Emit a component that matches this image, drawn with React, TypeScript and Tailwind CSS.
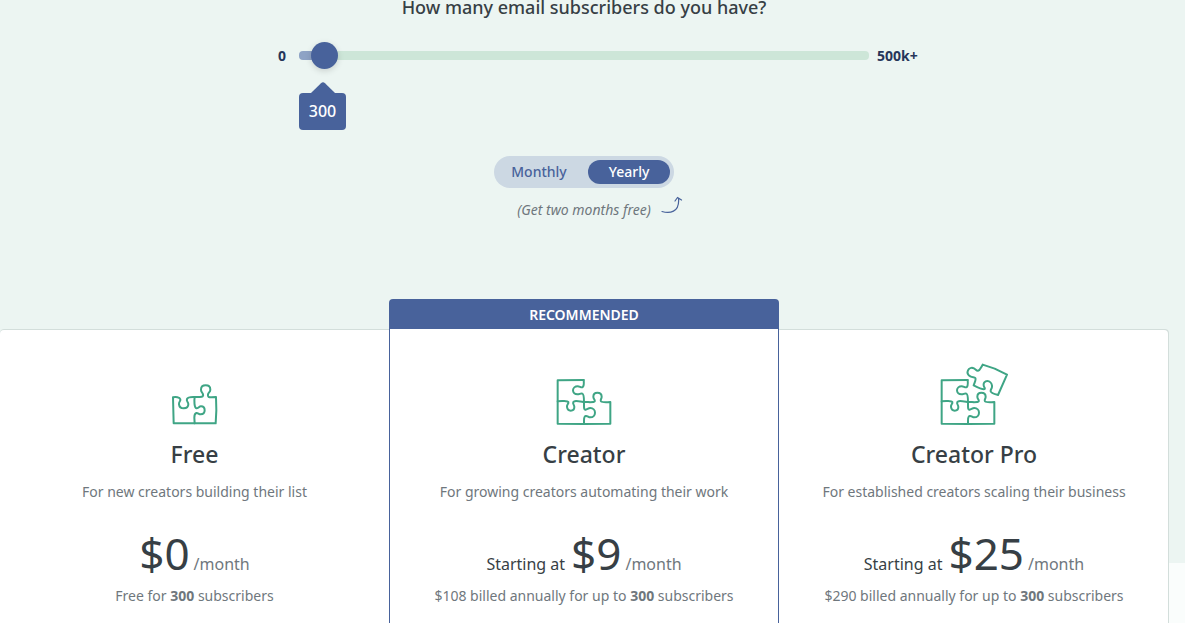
import { useState } from 'react';
import type { ReactNode } from 'react';

type Billing = 'monthly' | 'yearly';

interface Plan {
  name: string;
  tagline: string;
  price: string;
  prefix?: string;
  billing: string;
  icon: ReactNode;
  recommended?: boolean;
  frame: string;
}

const SUBSCRIBERS = 300;

function FreeIcon() {
  return (
    <svg viewBox="60 36 144 126" className="w-12 h-[42px]" fill="none" stroke="#3fa585" strokeWidth="6" strokeLinecap="round" strokeLinejoin="round" aria-hidden="true">
      <path d="M68 157 L66 79 c8 -2 20 -1 22 6 c1 7 -5 6 -4 15 c1 8 7 12 14 12 c8 0 14 -4 14 -12 c0 -8 -7 -9 -4 -16 c3 -7 12 -6 23 -6 h16 c7 0 11 -2 9 -8 c-2 -6 -6 -7 -6 -14 c0 -8 6 -13 14 -13 s14 5 14 13 c0 7 -6 8 -7 14 c-2 8 3 9 10 9 l14 -1 l1 40 l-2 39 Z" />
      <path d="M131 79 c-2 10 -1 32 5 33 c5 1 8 -6 14 -6 c7 0 11 5 11 12 s-5 12 -12 12 c-6 0 -8 -5 -13 -4 c-6 2 -6 8 -6 14 l1 17" />
    </svg>
  );
}

/* four-piece body shared by the Creator and Creator Pro icons */
function PuzzleBody() {
  return (
    <>
      <path d="M131 45 L53 46 V176 L132 177 L211 176 V111 c-12 1 -24 2 -28 -2 c-3 -5 2 -7 2 -14 c0 -8 -6 -12 -13 -12 s-12 5 -12 12 c0 7 6 9 4 14 c-3 4 -16 2 -32 2" />
      <path d="M131 45 c1 10 1 20 -4 22 c-5 1 -8 -3 -14 -3 c-8 0 -14 5 -14 12 s6 12 13 12 c7 0 10 -4 15 -2 c5 2 5 12 5 25" />
      <path d="M53 109 l14 -1 c8 0 16 -1 18 3 c2 5 -5 7 -4 15 c1 7 5 11 11 11 s11 -4 11 -11 c0 -7 -6 -9 -3 -15 c3 -5 12 -3 32 0" />
      <path d="M132 111 v12 c0 8 1 12 5 11 c5 -1 8 -5 14 -5 c8 0 14 6 14 14 s-6 14 -14 14 c-6 0 -8 -5 -14 -4 c-5 1 -5 6 -5 14 v10" />
    </>
  );
}

function CreatorIcon() {
  return (
    <svg viewBox="48 42 168 138" className="w-14 h-[46px]" fill="none" stroke="#3fa585" strokeWidth="6" strokeLinecap="round" strokeLinejoin="round" aria-hidden="true">
      <PuzzleBody />
    </svg>
  );
}

function CreatorProIcon() {
  return (
    <svg viewBox="40 24 204 186" className="w-[68px] h-[62px]" fill="none" stroke="#3fa585" strokeWidth="6" strokeLinecap="round" strokeLinejoin="round" aria-hidden="true">
      <g transform="translate(-8 30)">
        <PuzzleBody />
      </g>
      <path d="M168 29 L204 41 L241 59 L214 120 c-10 -3 -21 -6 -22 -11 c-1 -6 5 -8 4 -17 c-1 -8 -7 -14 -14 -14 c-8 0 -12 6 -11 13 c1 7 5 8 3 11 c-4 3 -15 -2 -33 -11 c3 -9 8 -18 5 -22 c-3 -4 -8 -1 -15 -5 c-8 -4 -10 -11 -7 -18 c3 -7 11 -9 18 -6 c6 3 7 8 12 7 c6 -1 8 -8 14 -18" />
    </svg>
  );
}

const plans: Plan[] = [
  {
    name: 'Free',
    tagline: 'For new creators building their list',
    price: '$0',
    billing: 'Free for',
    icon: <FreeIcon />,
    frame: 'rounded-tl shadow-[inset_0_1px_#d3dedb]',
  },
  {
    name: 'Creator',
    tagline: 'For growing creators automating their work',
    prefix: 'Starting at',
    price: '$9',
    billing: '$108 billed annually for up to',
    icon: <CreatorIcon />,
    recommended: true,
    frame: 'border-x border-[#48629b]',
  },
  {
    name: 'Creator Pro',
    tagline: 'For established creators scaling their business',
    prefix: 'Starting at',
    price: '$25',
    billing: '$290 billed annually for up to',
    icon: <CreatorProIcon />,
    frame: 'rounded-tr shadow-[inset_-1px_1px_#d3dedb]',
  },
];

function SubscriberSlider() {
  const [position, setPosition] = useState(22);

  return (
    <div className="w-full max-w-[670px]">
      <div className="flex items-center h-[27px] text-sm font-bold text-[#26355a]">
        <label htmlFor="subscribers" className="w-[50px] pl-[29px]">0</label>
        <input
          id="subscribers"
          type="range"
          min={0}
          max={1000}
          value={position}
          onChange={(e) => setPosition(Number(e.target.value))}
          aria-label="Email subscribers"
          className="flex-1 min-w-0 h-[9px] appearance-none rounded-[4px] cursor-pointer [&::-webkit-slider-thumb]:appearance-none [&::-webkit-slider-thumb]:size-[27px] [&::-webkit-slider-thumb]:rounded-full [&::-webkit-slider-thumb]:bg-[#48629b] [&::-webkit-slider-thumb]:shadow-[0_2px_6px_rgba(0,0,0,0.15)]"
          style={{
            background: `linear-gradient(to right, #8ea3c5 ${position / 10 + 2}%, #cde6d8 ${position / 10 + 2}%)`,
          }}
        />
        <span className="w-[50px] pl-2">500k+</span>
      </div>

      {/* Value bubble */}
      <div className="flex flex-col items-center w-[47px] ml-[50px] mt-[13px]">
        <svg viewBox="0 0 24 11" className="w-6 h-[11px]" fill="#48629b" aria-hidden="true">
          <path d="M0 11 L10 1.200 Q12 -0.600 14 1.200 L24 11 Z" />
        </svg>
        <output htmlFor="subscribers" className="w-full h-[37px] rounded bg-[#48629b] text-white text-center font-medium leading-9">
          {SUBSCRIBERS}
        </output>
      </div>
    </div>
  );
}

function BillingToggle() {
  const [billing, setBilling] = useState<Billing>('yearly');

  const pill = (active: boolean) =>
    active
      ? 'flex-1 rounded-full bg-[#48629b] text-white cursor-pointer'
      : 'flex-1 rounded-full text-[#48629b] cursor-pointer';

  return (
    <div className="flex gap-2 w-[180px] h-8 p-1 rounded-full bg-[#ccd8e3] text-sm font-medium">
      <button type="button" onClick={() => setBilling('monthly')} className={pill(billing === 'monthly')}>
        Monthly
      </button>
      <button type="button" onClick={() => setBilling('yearly')} className={pill(billing === 'yearly')}>
        Yearly
      </button>
    </div>
  );
}

function PlanCard({ plan }: { plan: Plan }) {
  return (
    <article className="flex flex-col">
      <div
        className={
          plan.recommended
            ? 'h-[30px] rounded-t bg-[#48629b] text-white text-sm leading-8 font-semibold text-center uppercase'
            : 'h-[30px]'
        }
      >
        {plan.recommended && 'Recommended'}
      </div>
      <div className={`flex-1 flex flex-col items-center bg-white text-center ${plan.frame}`}>
        <div className="h-24 flex items-end">{plan.icon}</div>
        <h2 className="mt-[15px] text-[23px] leading-7 font-medium text-[#373f45]">{plan.name}</h2>
        <p className="mt-3.5 text-sm leading-5">{plan.tagline}</p>
        <p className="mt-[23px] flex items-baseline justify-center gap-1 leading-6">
          {plan.prefix && <span className="mr-0.5 text-[#373f45]">{plan.prefix}</span>}
          <span className="text-[44px] leading-14 text-[#373f45]">{plan.price}</span>
          <span>/month</span>
        </p>
        <p className="mt-[5px] text-sm leading-5">
          {plan.billing} <strong className="font-bold">{SUBSCRIBERS}</strong> subscribers
        </p>
      </div>
    </article>
  );
}

export default function App() {
  return (
    <main className="min-h-screen flex flex-col pr-4 bg-[linear-gradient(to_bottom,#ecf5f2_563px,#fafdfc_563px)] font-['Noto_Sans',sans-serif] text-[#6f777d]">
      <section className="flex flex-col items-center pr-px">
        <h1 className="text-lg leading-3.5 font-medium text-[#373f45]">How many email subscribers do you have?</h1>
        <div className="w-full flex justify-center mt-7">
          <SubscriberSlider />
        </div>
        <div className="mt-[26px]">
          <BillingToggle />
        </div>
        <div className="flex gap-2.5 mt-2 pl-8 text-sm leading-7 italic">
          <span>(Get two months free)</span>
          <svg viewBox="0 0 22 18" className="w-[22px] h-[18px]" fill="none" stroke="#48629b" strokeWidth="1.200" strokeLinecap="round" strokeLinejoin="round" aria-hidden="true">
            <path d="M1 15.500 C8 17.500 19 17 17.500 2 M14 5 L16.500 1.500 L20.500 4" />
          </svg>
        </div>
      </section>

      {/* Plans */}
      <section className="flex-1 grid grid-cols-[389fr_390fr_390fr] mt-[75px]">
        {plans.map((plan) => (
          <PlanCard key={plan.name} plan={plan} />
        ))}
      </section>
    </main>
  );
}
